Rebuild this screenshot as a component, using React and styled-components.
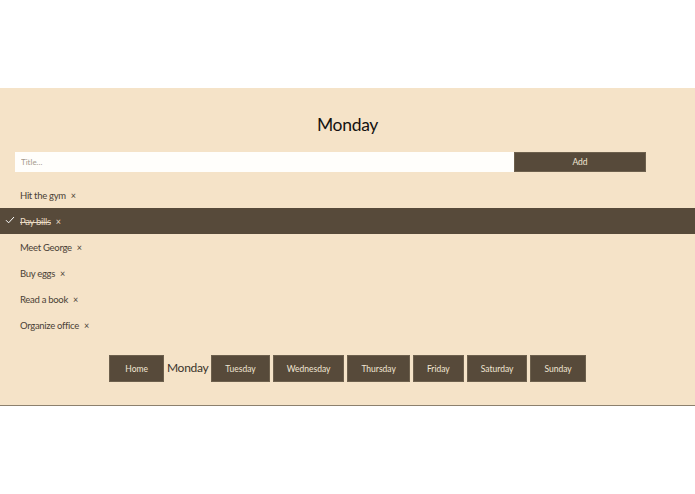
import React, { useState } from 'react';
import styled, { createGlobalStyle } from 'styled-components';

const GlobalStyle = createGlobalStyle`
  html, body {
    margin: 0;
    padding: 0;
    background: #ffffff;
    font-family: Lato, "Noto Sans", sans-serif;
  }
`;

const TopSpace = styled.div`
  height: 88px;
  background: #ffffff;
`;

const Board = styled.section`
  background: #f5e3c8;
  border-bottom: 1px solid #8c806d;
  padding: 25px 0 23px;
`;

const Title = styled.h1`
  margin: 0 0 15px;
  text-align: center;
  font-size: 17.5px;
  line-height: 24px;
  font-weight: 400;
  letter-spacing: -0.3px;
  color: #141210;
`;

const Form = styled.form`
  display: grid;
  grid-template-columns: 499px 132px;
  margin: 0 0 10px 15px;
  height: 20px;
`;

const TitleInput = styled.input`
  border: none;
  outline: none;
  background: #fffefb;
  padding: 0 6px;
  font-family: inherit;
  font-size: 8px;
  color: #333;
  &::placeholder {
    color: #a59a8c;
  }
`;

const AddButton = styled.button`
  border: 1px solid #6d604d;
  background: #574a3a;
  color: #f1e6d4;
  font-family: inherit;
  font-size: 8.5px;
  cursor: pointer;
`;

const List = styled.ul`
  list-style: none;
  margin: 0;
  padding: 0;
`;

const Item = styled.li`
  position: relative;
  display: flex;
  align-items: center;
  height: 26px;
  padding-left: 20px;
  background: ${p => (p.$done ? '#574a3a' : 'transparent')};
  color: ${p => (p.$done ? '#eadcc4' : '#4a4136')};
  font-size: 9.5px;
  letter-spacing: -0.3px;
  cursor: pointer;
`;

const Label = styled.span`
  text-decoration: ${p => (p.$done ? 'line-through' : 'none')};
`;

const Remove = styled.span`
  margin-left: 5px;
  font-size: 9px;
`;

const Check = styled.svg`
  position: absolute;
  left: 5px;
  top: 8px;
`;

const Nav = styled.nav`
  display: flex;
  justify-content: center;
  align-items: center;
  gap: 3px;
  margin-top: 17px;
`;

const DayButton = styled.button`
  height: 27px;
  padding: 0 ${p => p.$pad || 13}px;
  border: 1px solid #6d604d;
  background: #574a3a;
  color: #f1e6d4;
  font-family: inherit;
  font-size: 8.5px;
  cursor: pointer;
`;

const Current = styled.span`
  font-size: 12px;
  letter-spacing: -0.3px;
  color: #3a332b;
  padding: 0 0 2px;
`;

const initial = [
  { title: 'Hit the gym', done: false },
  { title: 'Pay bills', done: true },
  { title: 'Meet George', done: false },
  { title: 'Buy eggs', done: false },
  { title: 'Read a book', done: false },
  { title: 'Organize office', done: false },
];

const days = ['Tuesday', 'Wednesday', 'Thursday', 'Friday', 'Saturday', 'Sunday'];

export default function App() {
  const [items, setItems] = useState(initial);
  const [title, setTitle] = useState('');

  const add = e => {
    e.preventDefault();
    if (!title.trim()) return;
    setItems([...items, { title, done: false }]);
    setTitle('');
  };

  const toggle = i =>
    setItems(items.map((it, j) => (j === i ? { ...it, done: !it.done } : it)));

  const remove = (e, i) => {
    e.stopPropagation();
    setItems(items.filter((_, j) => j !== i));
  };

  return (
    <>
      <GlobalStyle />
      <TopSpace />
      <Board>
        <Title>Monday</Title>
        <Form onSubmit={add}>
          <TitleInput
            placeholder="Title..."
            value={title}
            onChange={e => setTitle(e.target.value)}
          />
          <AddButton type="submit">Add</AddButton>
        </Form>
        <List>
          {items.map((it, i) => (
            <Item key={i} $done={it.done} onClick={() => toggle(i)}>
              {it.done && (
                <Check width="10" height="8" viewBox="0 0 10 8">
                  <path d="M1 4.2 L3.6 6.8 L9 1" fill="none" stroke="#ffffff" strokeWidth="1" />
                </Check>
              )}
              <Label $done={it.done}>{it.title}</Label>
              <Remove onClick={e => remove(e, i)}>×</Remove>
            </Item>
          ))}
        </List>
        <Nav>
          <DayButton $pad={15}>Home</DayButton>
          <Current>Monday</Current>
          {days.map(d => (
            <DayButton key={d}>{d}</DayButton>
          ))}
        </Nav>
      </Board>
    </>
  );
}
